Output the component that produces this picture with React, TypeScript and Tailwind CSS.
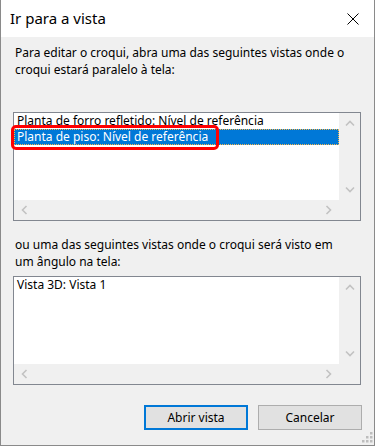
import type { ReactNode } from "react"

type Dir = "up" | "down" | "left" | "right"

function Chevron({ dir }: { dir: Dir }) {
  const vertical = dir === "up" || dir === "down"
  const paths: Record<Dir, string> = {
    up: "M1 5.5 L5 1.5 L9 5.5",
    down: "M1 1.5 L5 5.5 L9 1.5",
    left: "M5.5 1 L1.5 5 L5.5 9",
    right: "M1.5 1 L5.5 5 L1.5 9",
  }
  return (
    <svg
      width={vertical ? 10 : 7}
      height={vertical ? 7 : 10}
      viewBox={vertical ? "0 0 10 7" : "0 0 7 10"}
      fill="none"
      stroke="#c2c2c2"
      strokeWidth={1.6}
    >
      <path d={paths[dir]} />
    </svg>
  )
}

function ListBox({ children }: { children: ReactNode }) {
  return (
    <div className="relative grid h-[109px] w-[348px] grid-cols-[325px_21px] grid-rows-[87px_20px] border border-[#828790] bg-[#f0f0f0]">
      <div className="bg-white">{children}</div>
      <div className="flex flex-col">
        <div className="flex h-[21px] items-center justify-center">
          <Chevron dir="up" />
        </div>
        <div className="flex-1" />
        <div className="flex h-[21px] items-center justify-center">
          <Chevron dir="down" />
        </div>
      </div>
      <div className="flex items-center">
        <div className="flex w-[21px] items-center justify-center">
          <Chevron dir="left" />
        </div>
        <div className="flex-1" />
        <div className="flex w-[21px] items-center justify-center">
          <Chevron dir="right" />
        </div>
      </div>
      <div />
    </div>
  )
}

function Item({ label, selected }: { label: string; selected?: boolean }) {
  return (
    <div
      className={
        selected
          ? "h-[16px] whitespace-nowrap bg-[#0078d7] pl-[3px] leading-[16px] text-white outline-1 -outline-offset-1 outline-[#f7b64a] outline-dotted"
          : "h-[16px] whitespace-nowrap pl-[3px] leading-[16px] text-black"
      }
    >
      {label}
    </div>
  )
}

export default function App() {
  return (
    <div className="relative flex h-[446px] w-[375px] flex-col border-x border-b border-[#8a8a8a] bg-[#f0f0f0] font-['Noto_Sans',sans-serif] text-[12px] text-black">
      <div className="flex h-[37px] shrink-0 items-center justify-between bg-white pl-[9px] pr-[15px]">
        <span className="text-[15px]">Ir para a vista</span>
        <svg width="12" height="12" viewBox="0 0 12 12" stroke="#000" strokeWidth="1">
          <path d="M0.5 0.5 L11.5 11.5 M11.5 0.5 L0.5 11.5" />
        </svg>
      </div>

      <div className="flex flex-col px-[12px]">
        <p className="mt-[7px] whitespace-nowrap pl-[2px] leading-[17px]">
          Para editar o croqui, abra uma das seguintes vistas onde o
          <br />
          croqui estará paralelo à tela:
        </p>

        <div className="mt-[34px]">
          <ListBox>
            <div className="relative">
              <Item label="Planta de forro refletido: Nível de referência" />
              <Item label="Planta de piso: Nível de referência" selected />
            </div>
          </ListBox>
        </div>

        <p className="mt-[15px] whitespace-nowrap pl-[2px] leading-[17px]">
          ou uma das seguintes vistas onde o croqui será visto em
          <br />
          um ângulo na tela:
        </p>

        <div className="mt-[6px]">
          <ListBox>
            <Item label="Vista 3D: Vista 1" />
          </ListBox>
        </div>

        <div className="mt-[20px] flex justify-end gap-[10px] pr-[0px]">
          <button className="h-[25px] w-[104px] border-2 border-[#0078d7] bg-[#e1e1e1] text-[12px]">
            Abrir vista
          </button>
          <button className="h-[25px] w-[104px] border border-[#adadad] bg-[#e1e1e1] text-[12px]">
            Cancelar
          </button>
        </div>
      </div>

      <div className="pointer-events-none absolute left-[10px] top-[125px] h-[25px] w-[208px] rounded-[5px] border-[3px] border-[#ff0000]" />

      <svg className="absolute bottom-[2px] right-[1px]" width="11" height="11" viewBox="0 0 11 11" fill="#bdbdbd">
        <rect x="8" y="0" width="2.5" height="2.5" />
        <rect x="4" y="4" width="2.5" height="2.5" />
        <rect x="8" y="4" width="2.5" height="2.5" />
        <rect x="0" y="8" width="2.5" height="2.5" />
        <rect x="4" y="8" width="2.5" height="2.5" />
        <rect x="8" y="8" width="2.5" height="2.5" />
      </svg>
    </div>
  )
}
